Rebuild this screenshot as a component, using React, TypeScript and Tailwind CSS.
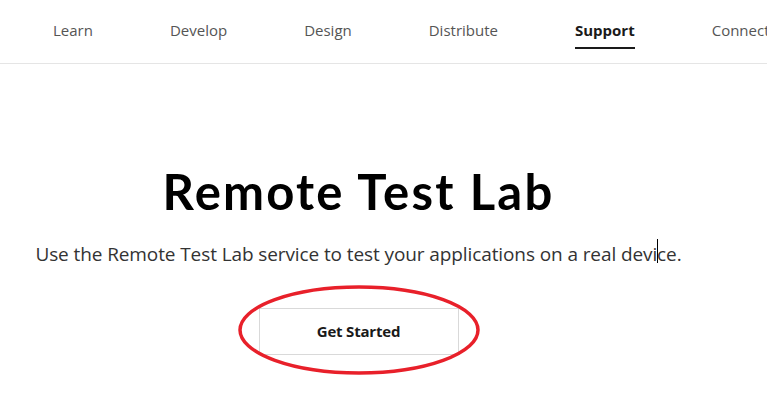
import React from 'react';

const NAV_ITEMS = ['Learn', 'Develop', 'Design', 'Distribute', 'Support', 'Connect'];

const App: React.FC = () => {
  return (
    <div className="w-[767px] h-[400px] bg-white overflow-hidden" style={{ fontFamily: '"Open Sans", "Liberation Sans", sans-serif' }}>
      {/* Top navigation */}
      <nav className="h-[64px] border-b border-[#e5e5e5] flex items-start pl-[53px] gap-[77px] whitespace-nowrap overflow-hidden">
        {NAV_ITEMS.map(item => {
          const active = item === 'Support';
          return (
            <div key={item} className="flex flex-col pt-[19px]">
              <span className={`text-[15px] leading-[22px] ${active ? 'font-bold text-[#1a1a1a]' : 'text-[#555]'}`}>
                {item}
              </span>
              {active && <span className="mt-[6px] h-[2px] bg-[#1a1a1a]" />}
            </div>
          );
        })}
      </nav>

      {/* Hero */}
      <main className="w-[717px] flex flex-col items-center">
        <h1
          className="mt-[99px] text-[49px] leading-[56px] font-bold text-black tracking-[2.2px]"
          style={{ fontFamily: '"Lato", "Liberation Sans", sans-serif' }}
        >
          Remote Test Lab
        </h1>
        <p className="mt-[22px] text-[19px] leading-[26px] text-[#333] tracking-[-0.1px] relative">
          Use the Remote Test Lab service to test your applications on a real devi
          <span className="relative">
            <span className="absolute left-0 top-[-2px] w-[1px] h-[24px] bg-black" />
          </span>
          ce.
        </p>
        <div className="relative mt-[41px]">
          <button className="w-[200px] h-[47px] border border-[#d9d9d9] bg-white text-[15px] font-bold text-[#1a1a1a] tracking-[-0.2px]">
            Get Started
          </button>
          <svg className="absolute left-[-22px] top-[-24px] pointer-events-none" width="244" height="92" viewBox="0 0 244 92">
            <ellipse cx="122" cy="46" rx="119" ry="43" fill="none" stroke="#e8202a" strokeWidth="3.5" />
          </svg>
        </div>
      </main>
    </div>
  );
};

export default App;
